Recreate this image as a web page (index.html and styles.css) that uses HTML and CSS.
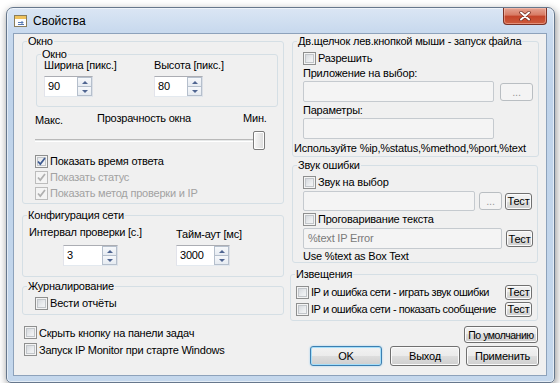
FILE: index.html
```html
<!DOCTYPE html>
<html lang="ru">
<head>
    <meta charset="UTF-8">
    <title>Свойства</title>
    <link rel="stylesheet" href="styles.css">
</head>
<body>
<div class="window">
    <div class="titlebar">
        <svg class="app-icon" width="13" height="12" viewBox="0 0 13 12">
            <rect x="0.5" y="0.5" width="12" height="11" fill="#fdfdfd" stroke="#8a7d5c"/>
            <rect x="1" y="1" width="11" height="3" fill="#efc25c"/>
            <path d="M4 7.5h5M7.5 6l1.5 1.5-1.5 1.5M4 9.5h6" stroke="#5679b3" fill="none"/>
        </svg>
        <span class="title">Свойства</span>
        <div class="close-btn">
            <svg width="12" height="10" viewBox="0 0 12 10">
                <path d="M2 1.5l8 7M10 1.5l-8 7" stroke="#6b2a1f" stroke-width="3.4" stroke-linecap="round"/>
                <path d="M2 1.5l8 7M10 1.5l-8 7" stroke="#fff" stroke-width="2" stroke-linecap="round"/>
            </svg>
        </div>
    </div>

    <div class="client">
        <!-- левая колонка -->
        <div class="col-left">
            <fieldset class="grp grp-window">
                <legend>Окно</legend>
                <fieldset class="grp grp-size">
                    <legend>Окно</legend>
                    <div class="size-row">
                        <div class="size-field">
                            <div class="lbl">Ширина [пикс.]</div>
                            <div class="spin spin-size"><span class="spin-val">90</span><span class="spin-btns"><span class="spin-up"></span><span class="spin-down"></span></span></div>
                        </div>
                        <div class="size-field">
                            <div class="lbl">Высота [пикс.]</div>
                            <div class="spin spin-size"><span class="spin-val">80</span><span class="spin-btns"><span class="spin-up"></span><span class="spin-down"></span></span></div>
                        </div>
                    </div>
                </fieldset>

                <div class="slider-labels">
                    <span class="lbl-max">Макс.</span>
                    <span class="lbl-mid">Прозрачность окна</span>
                    <span>Мин.</span>
                </div>
                <div class="slider"><span class="thumb"></span></div>

                <div class="cb-list">
                    <div class="cb-row"><span class="cb checked"><svg width="11" height="11" viewBox="0 0 11 11"><path d="M2 5.5l2.3 2.6L9 2" stroke="#3d5a91" stroke-width="1.7" fill="none"/></svg></span>Показать время ответа</div>
                    <div class="cb-row disabled"><span class="cb checked"><svg width="11" height="11" viewBox="0 0 11 11"><path d="M2 5.5l2.3 2.6L9 2" stroke="#b0b0b0" stroke-width="1.7" fill="none"/></svg></span>Показать статус</div>
                    <div class="cb-row disabled"><span class="cb checked"><svg width="11" height="11" viewBox="0 0 11 11"><path d="M2 5.5l2.3 2.6L9 2" stroke="#b0b0b0" stroke-width="1.7" fill="none"/></svg></span>Показать метод проверки и IP</div>
                </div>
            </fieldset>

            <fieldset class="grp grp-net">
                <legend>Конфигурация сети</legend>
                <div class="net-row">
                    <div class="net-field net-interval">
                        <div class="lbl">Интервал проверки [с.]</div>
                        <div class="spin spin-interval"><span class="spin-val">3</span><span class="spin-btns"><span class="spin-up"></span><span class="spin-down"></span></span></div>
                    </div>
                    <div class="net-field net-timeout">
                        <div class="lbl">Тайм-аут [мс]</div>
                        <div class="spin spin-timeout"><span class="spin-val">3000</span><span class="spin-btns"><span class="spin-up"></span><span class="spin-down"></span></span></div>
                    </div>
                </div>
            </fieldset>

            <fieldset class="grp grp-log">
                <legend>Журналирование</legend>
                <div class="grp-body log-body">
                    <div class="cb-row"><span class="cb"></span>Вести отчёты</div>
                </div>
            </fieldset>

            <div class="opts">
                <div class="cb-row"><span class="cb"></span>Скрыть кнопку на панели задач</div>
                <div class="cb-row"><span class="cb"></span>Запуск IP Monitor при старте Windows</div>
            </div>
        </div>

        <!-- правая колонка -->
        <div class="col-right">
            <fieldset class="grp grp-dbl">
                <legend>Дв.щелчок лев.кнопкой мыши - запуск файла</legend>
                <div class="grp-body dbl-body">
                    <div class="cb-row first"><span class="cb"></span>Разрешить</div>
                    <div class="lbl lbl-app">Приложение на выбор:</div>
                    <div class="edit-row">
                        <span class="edit edit-app"></span>
                        <span class="btn btn-disabled btn-browse">...</span>
                    </div>
                    <div class="lbl lbl-params">Параметры:</div>
                    <span class="edit edit-params"></span>
                    <div class="lbl hint">Используйте %ip,%status,%method,%port,%text</div>
                </div>
            </fieldset>

            <fieldset class="grp grp-sound">
                <legend>Звук ошибки</legend>
                <div class="grp-body sound-body">
                    <div class="cb-row first"><span class="cb"></span>Звук на выбор</div>
                    <div class="edit-row row-sound">
                        <span class="edit edit-sound"></span>
                        <span class="btn btn-disabled btn-dots">...</span>
                        <span class="btn btn-test">Тест</span>
                    </div>
                    <div class="cb-row"><span class="cb"></span>Проговаривание текста</div>
                    <div class="edit-row row-speech">
                        <span class="edit edit-speech">%text IP Error</span>
                        <span class="btn btn-test">Тест</span>
                    </div>
                    <div class="note">Use %text as Box Text</div>
                </div>
            </fieldset>

            <fieldset class="grp grp-notify">
                <legend>Извещения</legend>
                <div class="grp-body notify-body">
                    <div class="cb-row notify-row first"><span class="cb"></span><span class="notify-text">IP и ошибка сети - играть звук ошибки</span><span class="btn btn-test btn-small">Тест</span></div>
                    <div class="cb-row notify-row"><span class="cb"></span><span class="notify-text">IP и ошибка сети - показать сообщение</span><span class="btn btn-test btn-small">Тест</span></div>
                </div>
            </fieldset>

            <span class="btn btn-defaults">По умолчанию</span>
            <div class="actions">
                <span class="btn btn-main btn-ok">OK</span>
                <span class="btn btn-main btn-exit">Выход</span>
                <span class="btn btn-main btn-apply">Применить</span>
            </div>
        </div>
    </div>
</div>
</body>
</html>
```

FILE: styles.css
```css
/* Окно свойств в стиле Windows 7 */
body {
    margin: 0;
    background: #fff;
    font-family: "Liberation Sans", Arial, sans-serif;
    font-size: 11px;
    letter-spacing: -0.2px;
    color: #000;
}

.window {
    box-sizing: border-box;
    width: 549px;
    height: 376px;
    margin: 7px 0 0 6px;
    padding: 0 7px 6px 6px;
    border: 1px solid #66778c;
    border-radius: 7px 7px 5px 5px;
    background: linear-gradient(180deg, #dbe6f4 0%, #c9daee 22px, #bfd3ea 80px, #c4d7ec 100%);
    box-shadow: 1px 3px 8px rgba(0, 0, 0, 0.45), inset 0 0 0 1px rgba(255, 255, 255, 0.55);
    display: flex;
    flex-direction: column;
}

/* Заголовок */
.titlebar {
    height: 25px;
    display: flex;
    align-items: center;
}

.app-icon {
    margin: 1px 0 0 1px;
}

.title {
    margin-left: 6px;
    font-size: 12px;
    letter-spacing: 0;
}

.close-btn {
    margin-left: auto;
    align-self: flex-start;
    box-sizing: border-box;
    width: 44px;
    height: 17px;
    border: 1px solid #7a3226;
    border-top: none;
    border-radius: 0 0 4px 4px;
    background: linear-gradient(180deg, #e6a493 0%, #d77a63 45%, #c4442a 50%, #cd5b3c 100%);
    box-shadow: inset 0 0 0 1px rgba(255, 210, 200, 0.45);
    display: flex;
    align-items: center;
    justify-content: center;
}

/* Клиентская область */
.client {
    flex: 1;
    background: #f0f0f0;
    border: 1px solid #8da2bb;
    display: flex;
    gap: 6px;
    padding: 1px 7px 0 8px;
}

.col-left {
    width: 262px;
    display: flex;
    flex-direction: column;
}

.col-right {
    width: 249px;
    display: flex;
    flex-direction: column;
}

/* Группы */
.grp {
    margin: 0;
    padding: 0;
    border: 1px solid #d5dfe5;
    border-radius: 3px;
    min-width: 0;
}

.grp > legend {
    margin-left: 4px;
    padding: 0 1px;
    line-height: 13px;
    white-space: nowrap;
}

.lbl {
    line-height: 13px;
    white-space: nowrap;
}

.grp-size {
    margin: 0 5px 0 13px;
}

.size-row {
    display: flex;
    padding: 0 0 9px 7px;
}

.size-field {
    width: 110px;
}

.size-field .lbl {
    line-height: 9px;
    margin-top: 0;
}

.size-field .spin {
    margin-top: 6px;
}

/* Поле со стрелками */
.spin {
    box-sizing: border-box;
    height: 21px;
    display: flex;
    border: 1px solid;
    border-color: #abadb3 #dbdfe6 #e3e9ef #e2e3ea;
    background: #fff;
}

.spin-size {
    width: 49px;
}

.spin-interval {
    width: 55px;
    margin-left: 34px;
}

.spin-timeout {
    width: 54px;
}

.spin-val {
    flex: 1;
    padding-left: 3px;
    line-height: 19px;
}

.spin-btns {
    width: 15px;
    display: flex;
    flex-direction: column;
}

.spin-up, .spin-down {
    flex: 1;
    box-sizing: border-box;
    border: 1px solid #b5bfcc;
    background: linear-gradient(180deg, #f6f8fb 0%, #e6ebf1 100%);
    display: flex;
    align-items: center;
    justify-content: center;
}

.spin-down {
    border-top: none;
}

.spin-up::after {
    content: "";
    border-left: 3px solid transparent;
    border-right: 3px solid transparent;
    border-bottom: 3px solid #4f6591;
}

.spin-down::after {
    content: "";
    border-left: 3px solid transparent;
    border-right: 3px solid transparent;
    border-top: 3px solid #4f6591;
}

/* Ползунок прозрачности */
.slider-labels {
    display: flex;
    margin: 5px 0 0 12px;
    line-height: 13px;
}

.lbl-max {
    width: 62px;
    margin-top: 2px;
}

.lbl-mid {
    width: 146px;
}

.slider {
    width: 230px;
    height: 19px;
    margin: 4px 0 0 12px;
    display: flex;
    justify-content: flex-end;
    background: linear-gradient(180deg, transparent 8px, #b9b9b9 8px, #b9b9b9 9px, #e6e8e8 9px, #e6e8e8 10px, #fff 10px, #fff 11px, transparent 11px);
}

.thumb {
    box-sizing: border-box;
    width: 12px;
    height: 19px;
    border: 1px solid #7b7b7b;
    border-radius: 2px;
    background: linear-gradient(90deg, #f7f7f7 0%, #eaeaea 50%, #dadada 100%);
    box-shadow: inset 0 0 0 1px #fff;
}

/* Флажки */
.cb-list {
    margin: 3px 0 2px 12px;
}

.cb-row {
    display: flex;
    align-items: center;
    height: 16px;
    white-space: nowrap;
}

.cb {
    box-sizing: border-box;
    width: 13px;
    height: 13px;
    margin-right: 2px;
    flex-shrink: 0;
    border: 1px solid #8e8f8f;
    background: linear-gradient(135deg, #cdd1d6 0%, #eceef0 60%, #f8f8f8 100%);
    box-shadow: inset 0 0 0 1px #f4f4f4, inset 0 0 0 2px #c2c6ca;
    display: flex;
}

.cb.checked {
    background: linear-gradient(135deg, #e1e4e8 0%, #f8f8f8 100%);
}

.disabled {
    color: #a2a2a2;
}

.disabled .cb {
    border-color: #bcbcbc;
    box-shadow: inset 0 0 0 1px #f4f4f4;
    background: #f4f4f4;
}

/* Конфигурация сети */
.grp-net {
    margin-top: 5px;
}

.net-row {
    display: flex;
    padding: 0 0 10px 6px;
}

.net-interval {
    width: 147px;
}

.net-interval .lbl {
    margin-top: 4px;
}

.net-interval .spin {
    margin-top: 6px;
}

.net-timeout .lbl {
    margin-top: 6px;
}

.net-timeout .spin {
    margin-top: 4px;
}

.grp-log {
    margin-top: 3px;
}

.log-body {
    padding: 2px 0 3px 12px;
}

.opts {
    margin: 9px 0 0 2px;
}

.opts .cb-row {
    height: 17px;
}

/* Правая колонка */
.grp-dbl {
    margin-left: 2px;
}

.dbl-body {
    padding: 0 0 1px 10px;
}

.cb-row.first {
    margin-top: 2px;
}

.lbl-app {
    margin-top: 1px;
}

.edit-row {
    display: flex;
    align-items: center;
    margin-top: 1px;
}

.edit {
    display: block;
    box-sizing: border-box;
    height: 21px;
    border: 1px solid #c5cacf;
    border-radius: 2px;
    background: #f4f4f4;
}

.edit-app, .edit-params {
    width: 191px;
}

.lbl-params {
    margin-top: 2px;
    margin-bottom: 1px;
}

.hint {
    margin: 3px 0 0 -9px;
}

.grp-sound {
    margin: 2px 1px 0 2px;
}

.sound-body {
    padding-left: 10px;
}

.row-sound .edit {
    height: 20px;
}

.edit-sound {
    width: 172px;
}

.edit-speech {
    width: 199px;
    padding-left: 4px;
    line-height: 19px;
    color: #7a7a7a;
}

.note {
    margin-top: 2px;
    line-height: 11px;
}

.grp-notify {
    margin: 5px 1px 0 0;
}

.notify-body {
    padding: 0 0 3px 3px;
}

.notify-row {
    margin-top: 1px;
}

.notify-row.first {
    margin-top: 3px;
}

.notify-row .cb {
    margin-left: 2px;
}

.notify-text {
    letter-spacing: -0.45px;
}

/* Кнопки */
.btn {
    box-sizing: border-box;
    border: 1px solid #707070;
    border-radius: 3px;
    background: linear-gradient(180deg, #f2f2f2 0%, #ebebeb 50%, #dddddd 50%, #cfcfcf 100%);
    box-shadow: inset 0 0 0 1px #fbfbfb;
    display: flex;
    align-items: center;
    justify-content: center;
    white-space: nowrap;
}

.btn-disabled {
    border-color: #b9bec2;
    background: #f4f4f4;
    box-shadow: none;
    color: #9a9a9a;
}

.btn-browse {
    width: 33px;
    height: 18px;
    margin-left: 6px;
}

.btn-dots {
    width: 23px;
    height: 18px;
    margin-left: 4px;
}

.btn-test {
    width: 27px;
    height: 17px;
    margin-left: 3px;
}

.row-speech .btn-test {
    margin-left: 4px;
}

.btn-small {
    height: 15px;
    margin-left: auto;
    margin-right: 5px;
}

.btn-defaults {
    align-self: flex-end;
    width: 74px;
    height: 17px;
    margin: 5px 1px 0 0;
    font-size: 10.5px;
    letter-spacing: -0.45px;
}

.actions {
    display: flex;
    justify-content: flex-end;
    margin-top: 3px;
}

.btn-main {
    height: 20px;
}

.btn-ok {
    width: 72px;
    border-color: #3c7fb1;
    box-shadow: inset 0 0 0 1px #a5def9, 0 0 2px #8cc9ef;
}

.btn-exit {
    width: 70px;
    margin-left: 8px;
}

.btn-apply {
    width: 73px;
    margin-left: 6px;
}
```
